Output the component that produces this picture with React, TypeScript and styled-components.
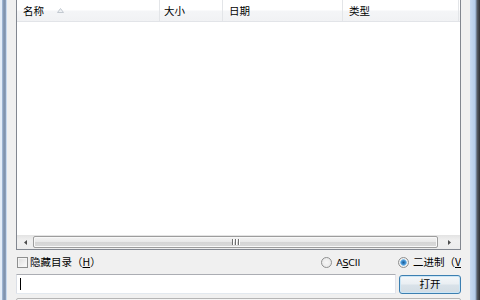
import React from "react";
import styled, { createGlobalStyle } from "styled-components";

const GlobalStyle = createGlobalStyle`
  html, body {
    margin: 0;
    padding: 0;
    width: 480px;
    height: 300px;
    overflow: hidden;
    background: #f0f0f0;
  }
`;

const cjk = `"Noto Sans CJK SC", "Microsoft YaHei", sans-serif`;

const Window = styled.div`
  display: flex;
  width: 480px;
  height: 300px;
  overflow: hidden;
  font-family: ${cjk};
  font-size: 10.5px;
  color: #000;
`;

const FrameLeft = styled.div`
  width: 7px;
  flex: none;
  background: linear-gradient(
    to right,
    #e4edf8 0px,
    #e4edf8 2px,
    #a9c1df 2px,
    #7c8ea8 4px,
    #8fa4c0 6px,
    #c8d9ee 6px,
    #c8d9ee 7px
  );
`;

const FrameRight = styled.div`
  width: 10px;
  flex: none;
  background: linear-gradient(
    to right,
    #c9dbf1 0px,
    #b6cde9 5px,
    #8a9fba 6px,
    #5a5f66 7px,
    #2f3033 10px
  );
`;

const Dialog = styled.div`
  flex: 1;
  min-width: 0;
  display: flex;
  flex-direction: column;
  padding: 0 9px;
  background: #f0f0f0;
  & > * {
    flex: none;
  }
`;

const ListView = styled.div`
  margin-top: -1px;
  height: 251px;
  box-sizing: border-box;
  border: 1px solid #828790;
  background: #fff;
  display: flex;
  flex-direction: column;
`;

const Header = styled.div`
  display: flex;
  height: 22px;
  flex: none;
  box-sizing: border-box;
  border-bottom: 1px solid #e2e4e8;
  background: linear-gradient(to bottom, #ffffff 0%, #ffffff 45%, #f4f5f7 55%, #f1f2f4 100%);
`;

const HeaderCell = styled.div<{ $w: number }>`
  width: ${(p) => p.$w}px;
  flex: none;
  box-sizing: border-box;
  display: flex;
  align-items: center;
  padding-left: ${(p) => (p.$w > 100 ? 6 : 4)}px;
  padding-top: 2px;
  border-right: 1px solid #e3e5e8;
  line-height: 1;
`;

const SortArrow = styled.svg`
  margin-left: 13px;
  margin-top: -2px;
`;

const ListBody = styled.div`
  flex: 1;
`;

const HScroll = styled.div`
  height: 14px;
  flex: none;
  display: flex;
  background: linear-gradient(to bottom, #e3e3e3, #f0f0f0 40%, #ececec);
`;

const ArrowBtn = styled.div<{ $w: number }>`
  width: ${(p) => p.$w}px;
  flex: none;
  display: flex;
  align-items: center;
  justify-content: center;
`;

const Thumb = styled.div`
  flex: 1;
  margin: 1px 0;
  border: 1px solid #9d9d9d;
  border-radius: 2px;
  background: linear-gradient(to bottom, #f3f3f3 0%, #e8e8e8 50%, #d5d5d5 51%, #dadada 100%);
  display: flex;
  align-items: center;
  justify-content: center;
  box-shadow: inset 0 0 0 1px #f8f8f8;
`;

const Grip = styled.div`
  display: flex;
  gap: 1px;
`;

const GripLine = styled.span`
  width: 1px;
  height: 6px;
  background: #6f6f6f;
  box-shadow: 1px 0 0 #fff;
  margin-right: 1px;
`;

const OptionsRow = styled.div`
  height: 22px;
  display: flex;
  align-items: center;
  margin-top: 1px;
  white-space: nowrap;
  overflow: hidden;
`;

const CheckBox = styled.span`
  width: 11px;
  height: 11px;
  flex: none;
  box-sizing: border-box;
  border: 1px solid #8e8f8f;
  background: linear-gradient(135deg, #dcdcdc, #f6f6f6 80%, #ffffff);
  box-shadow: inset 0 0 0 1px #f4f4f4;
  margin-left: 1px;
  margin-right: 2px;
`;

const Label = styled.span`
  line-height: 1;
`;

const Key = styled.span`
  text-decoration: underline;
`;

const Latin = styled.span`
  font-family: "DejaVu Sans", "Liberation Sans", sans-serif;
  font-size: 9.5px;
  letter-spacing: -0.2px;
`;

const Spacer = styled.div`
  flex: 1;
`;

const Radio = styled.span<{ $on?: boolean }>`
  width: 11px;
  height: 11px;
  box-sizing: border-box;
  border-radius: 50%;
  border: 1px solid #8e8f8f;
  background: ${(p) =>
    p.$on
      ? "radial-gradient(circle, #1c5b93 0px, #3f8fd2 2px, #85c0ea 3px, #f2f2f2 3.6px, #dcdcdc 100%)"
      : "radial-gradient(circle, #f6f6f6 0px, #e4e4e4 100%)"};
  margin-right: 4px;
  flex: none;
`;

const RadioGroup = styled.div<{ $gap?: number; $w?: number }>`
  display: flex;
  flex: none;
  align-items: center;
  overflow: hidden;
  margin-right: ${(p) => p.$gap ?? 0}px;
  ${(p) => (p.$w ? `width: ${p.$w}px;` : "")}
`;

const InputRow = styled.div`
  display: flex;
  align-items: center;
  height: 20px;
  margin-top: 1px;
  gap: 3px;
`;

const TextBox = styled.div`
  flex: 1;
  height: 20px;
  box-sizing: border-box;
  border: 1px solid #abadb3;
  border-left-color: #dbdfe6;
  border-right-color: #e2e3ea;
  border-bottom-color: #e3e9ef;
  border-radius: 1px;
  background: #fff;
  display: flex;
  align-items: center;
  padding-left: 3px;
`;

const Caret = styled.span`
  width: 1px;
  height: 12px;
  background: #000;
`;

const OpenButton = styled.div`
  width: 62px;
  height: 19px;
  margin-top: 1px;
  flex: none;
  box-sizing: border-box;
  border: 1px solid #3c7fb1;
  border-radius: 3px;
  background: linear-gradient(to bottom, #f4f7fa 0%, #e9eef2 48%, #d9e2e9 52%, #d2dce4 100%);
  box-shadow: inset 0 0 0 1px #cbe6f6;
  display: flex;
  align-items: center;
  justify-content: center;
  line-height: 1;
`;

const BottomBox = styled.div`
  margin-top: 4px;
  height: 20px;
  box-sizing: border-box;
  border: 1px solid #b5b5b5;
  border-radius: 2px;
  background: linear-gradient(to bottom, #f5f5f5, #e4e4e4);
`;

const columns: { title: string; w: number; sort?: boolean }[] = [
  { title: "名称", w: 143, sort: true },
  { title: "大小", w: 63 },
  { title: "日期", w: 120 },
  { title: "类型", w: 116 },
];

export default function App() {
  return (
    <>
      <GlobalStyle />
      <Window>
        <FrameLeft />
        <Dialog>
          <ListView>
            <Header>
              {columns.map((c) => (
                <HeaderCell key={c.title} $w={c.w}>
                  {c.title}
                  {c.sort && (
                    <SortArrow width="7" height="5" viewBox="0 0 7 5">
                      <path d="M0.5 4.5 L3.5 0.5 L6.5 4.5 Z" fill="#eef1f4" stroke="#c3c9d0" strokeWidth="1" />
                    </SortArrow>
                  )}
                </HeaderCell>
              ))}
            </Header>
            <ListBody />
            <HScroll>
              <ArrowBtn $w={16}>
                <svg width="3" height="5" viewBox="0 0 3 5">
                  <path d="M3 0 L0 2.5 L3 5 Z" fill="#4d4d4d" />
                </svg>
              </ArrowBtn>
              <Thumb>
                <Grip>
                  <GripLine />
                  <GripLine />
                  <GripLine />
                </Grip>
              </Thumb>
              <ArrowBtn $w={22}>
                <svg width="3" height="5" viewBox="0 0 3 5">
                  <path d="M0 0 L3 2.5 L0 5 Z" fill="#4d4d4d" />
                </svg>
              </ArrowBtn>
            </HScroll>
          </ListView>

          <OptionsRow>
            <CheckBox />
            <Label>
              隐藏目录（<Key>H</Key>）
            </Label>
            <Spacer />
            <RadioGroup $gap={38}>
              <Radio />
              <Label>
                <Latin>
                  A<Key>S</Key>CII
                </Latin>
              </Label>
            </RadioGroup>
            <RadioGroup $w={63}>
              <Radio $on />
              <Label>
                二进制（<Key>V</Key>）
              </Label>
            </RadioGroup>
          </OptionsRow>

          <InputRow>
            <TextBox>
              <Caret />
            </TextBox>
            <OpenButton>打开</OpenButton>
          </InputRow>

          <BottomBox />
        </Dialog>
        <FrameRight />
      </Window>
    </>
  );
}
